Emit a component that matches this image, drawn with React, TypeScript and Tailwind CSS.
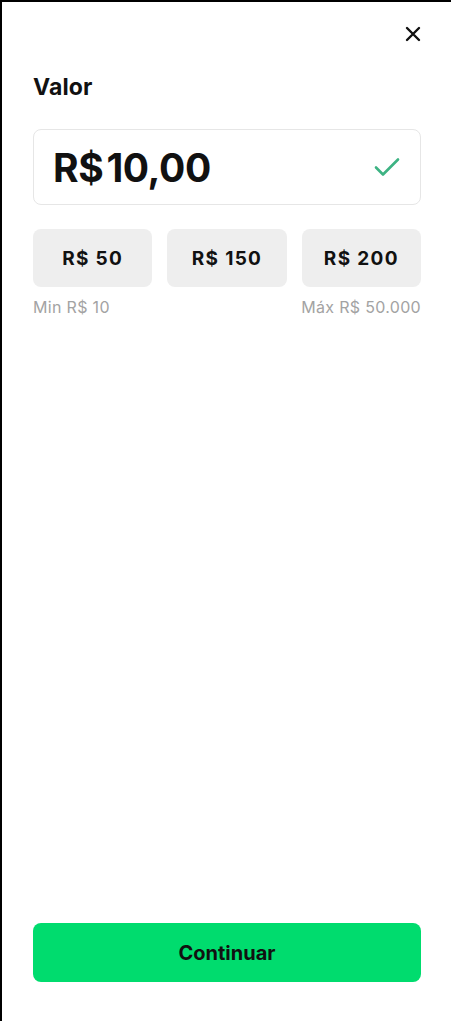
import React from "react";

export default function App() {
  return (
    <div
      className="h-[1021px] w-[451px] overflow-hidden border-t-2 border-l-2 border-black bg-white flex flex-col pl-[31px] pr-[30px]"
      style={{ fontFamily: "Inter, 'Noto Sans', sans-serif" }}
    >
      <div className="flex justify-end pt-[24px]">
        <button className="w-[16px] h-[16px] flex items-center justify-center" aria-label="Fechar">
          <svg width="16" height="16" viewBox="0 0 16 16" fill="none">
            <path d="M2 2L14 14M14 2L2 14" stroke="#111" strokeWidth="2.4" strokeLinecap="round" />
          </svg>
        </button>
      </div>

      <h2 className="mt-[31px] text-[23px] leading-[28px] font-bold text-[#111] tracking-[0.005em]">Valor</h2>

      <div className="mt-[28px] h-[76px] rounded-lg border border-[#e6e6e6] flex items-center justify-between pl-[19px] pr-[20px]">
        <span className="text-[39px] leading-none font-bold text-[#111] tracking-[-0.01em]">
          R$<span className="ml-[3px]">10,00</span>
        </span>
        <svg width="26" height="20" viewBox="0 0 26 20" fill="none">
          <path d="M2 10.5L9 17.5L24 2.5" stroke="#3db383" strokeWidth="2.6" strokeLinecap="round" strokeLinejoin="round" />
        </svg>
      </div>

      <div className="mt-[24px] grid grid-cols-3 gap-[15px]">
        {["R$ 50", "R$ 150", "R$ 200"].map((v) => (
          <button
            key={v}
            className="h-[58px] pt-[2px] rounded-lg bg-[#eeeeee] text-[19px] font-bold text-[#111] tracking-[0.07em]"
          >
            {v}
          </button>
        ))}
      </div>

      <div className="mt-[10px] flex justify-between text-[16px] leading-[20px] text-[#a3a3a3] tracking-[0.02em]">
        <span>Min R$ 10</span>
        <span>Máx R$ 50.000</span>
      </div>

      <div className="flex-1" />

      <button className="mb-[39px] h-[59px] rounded-lg bg-[#00dc6e] text-[20px] font-bold text-[#111]">
        Continuar
      </button>
    </div>
  );
}
